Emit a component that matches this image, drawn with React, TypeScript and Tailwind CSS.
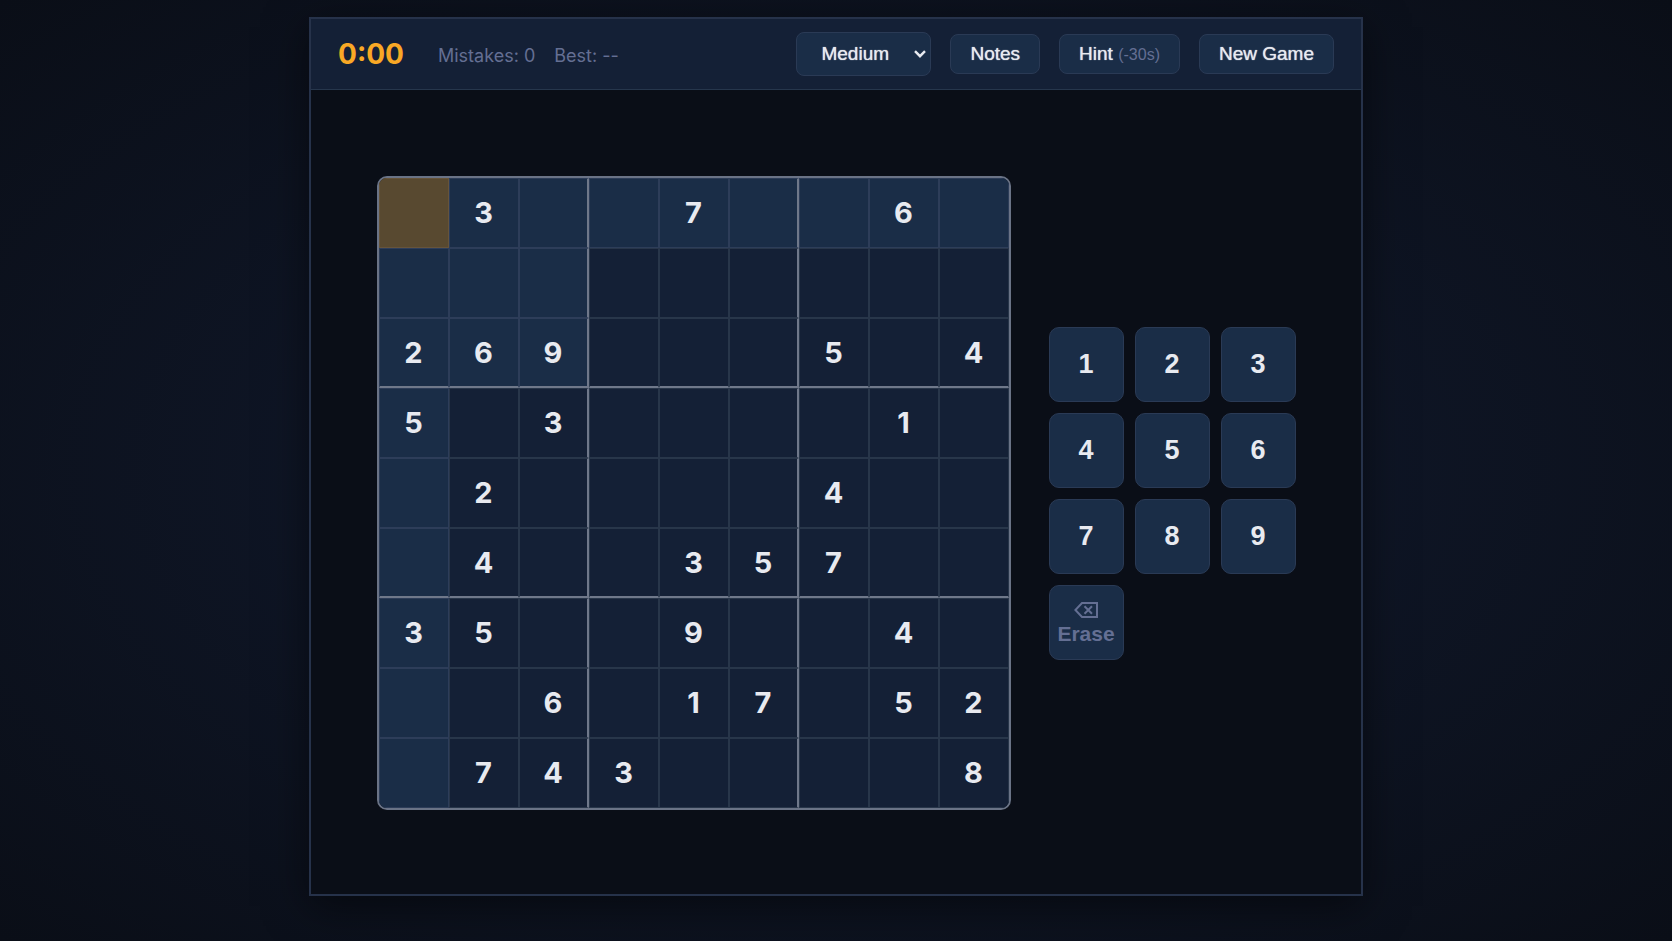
import { useState } from 'react';

const PUZZLE = [
  '030070060',
  '000000000',
  '269000504',
  '503000010',
  '020000400',
  '040035700',
  '350090040',
  '006017052',
  '074300008',
];

const LEVELS = ['Easy', 'Medium', 'Hard', 'Expert'];

interface Position {
  row: number;
  col: number;
}

interface CellProps {
  row: number;
  col: number;
  value: string;
  selected: Position;
  onSelect: (pos: Position) => void;
}

function Cell({ row, col, value, selected, onSelect }: CellProps) {
  const isSelected = selected.row === row && selected.col === col;
  const sameBox =
    Math.floor(selected.row / 3) === Math.floor(row / 3) &&
    Math.floor(selected.col / 3) === Math.floor(col / 3);
  const isPeer = selected.row === row || selected.col === col || sameBox;

  const background = isSelected ? 'bg-[#584930]' : isPeer ? 'bg-[#1a2d47]' : 'bg-[#142036]';
  const line = isSelected ? 'border-[#66543b]' : isPeer ? 'border-[#2d3d59]' : 'border-[#28364a]';
  const right = col === 2 || col === 5 ? 'border-r-2 border-r-[#6f788a]' : '';
  const bottom = row === 2 || row === 5 ? 'border-b-2 border-b-[#6f788a]' : '';

  return (
    <button
      aria-label={`Row ${row + 1}, column ${col + 1}`}
      onClick={() => onSelect({ row, col })}
      className={`flex size-[70px] items-center justify-center border text-[29px] font-bold text-[#e8eaf0] outline-none ${background} ${line} ${right} ${bottom}`}
    >
      {value === '0' ? '' : value}
    </button>
  );
}

export default function App() {
  const [level, setLevel] = useState('Medium');
  const [board, setBoard] = useState(PUZZLE.map((line) => line.split('')));
  const [selected, setSelected] = useState<Position>({ row: 0, col: 0 });

  const placeNumber = (value: string) => {
    if (PUZZLE[selected.row][selected.col] !== '0') return;
    const next = board.map((line) => [...line]);
    next[selected.row][selected.col] = value;
    setBoard(next);
  };

  const newGame = () => {
    setBoard(PUZZLE.map((line) => line.split('')));
    setSelected({ row: 0, col: 0 });
  };

  const actionClass =
    "h-10 rounded-lg border border-[#2a3a55] bg-[#1a2d47] px-[19px] font-['Liberation_Sans',Arial,sans-serif] text-[19px] leading-6 font-medium text-[#e8eaf0] [text-shadow:0_0_1px_currentColor] hover:bg-[#223858]";
  const keyClass =
    "size-[75px] rounded-[10px] border border-[#2a3a55] bg-[#1a2d47] font-['Liberation_Sans',Arial,sans-serif] font-bold hover:bg-[#223858]";

  return (
    <div className="flex min-h-screen justify-center bg-[#0a0e17] bg-[radial-gradient(ellipse_at_center,#121b30_0%,#0a0e17_100%)] px-4 pt-[17px] pb-[45px] font-[Inter,sans-serif] text-[#e8eaf0]">
      <div className="flex w-full max-w-[1054px] flex-col border-2 border-[#26324a] bg-[#0a0e17] shadow-[0_10px_40px_rgba(0,0,0,0.5)]">
        {/* Header */}
        <header className="flex items-center justify-between border-b border-[#26364c] bg-[#142036] px-[27px] py-[13px]">
          <div className="flex items-center">
            <span className="text-[28px] leading-9 font-bold text-[#f9a825]">0:00</span>
            <div className="ml-[34px] flex gap-[19px] pt-0.5 text-[18px] text-[#646f93]">
              <span>Mistakes: 0</span>
              <span>Best: --</span>
            </div>
          </div>

          <div className="flex items-center gap-[19px]">
            <div className="relative">
              <select
                aria-label="Difficulty"
                value={level}
                onChange={(e) => setLevel(e.target.value)}
                className="h-[44px] w-[135px] appearance-none rounded-lg border border-[#2a3a55] bg-[#1a2d47] pl-6 font-['Liberation_Sans',Arial,sans-serif] text-[19px] font-medium text-[#e8eaf0] [text-shadow:0_0_1px_currentColor]"
              >
                {LEVELS.map((name) => (
                  <option key={name}>{name}</option>
                ))}
              </select>
              <svg
                viewBox="0 0 12 8"
                className="pointer-events-none absolute top-[18px] right-[5px] h-2 w-3"
                fill="none"
                stroke="#e8eaf0"
                strokeWidth="2.4"
              >
                <path d="M1 1.2 6 6.2 11 1.2" />
              </svg>
            </div>
            <button className={actionClass}>Notes</button>
            <button className={actionClass}>
              Hint <span className="text-[16px] text-[#646f93] [text-shadow:none]">(-30s)</span>
            </button>
            <button onClick={newGame} className={actionClass}>
              New Game
            </button>
          </div>
        </header>

        {/* Board and number pad */}
        <main className="flex flex-1 items-center justify-center gap-[38px] pt-0.5">
          <div className="grid grid-cols-[repeat(9,70px)] overflow-hidden rounded-[10px] border-2 border-[#6a7386]">
            {board.map((line, row) =>
              line.map((value, col) => (
                <Cell
                  key={`${row}-${col}`}
                  row={row}
                  col={col}
                  value={value}
                  selected={selected}
                  onSelect={setSelected}
                />
              ))
            )}
          </div>

          <div className="grid grid-cols-3 gap-[11px]">
            {['1', '2', '3', '4', '5', '6', '7', '8', '9'].map((n) => (
              <button key={n} onClick={() => placeNumber(n)} className={`${keyClass} text-[27px]`}>
                {n}
              </button>
            ))}
            <button
              onClick={() => placeNumber('0')}
              className={`${keyClass} flex flex-col items-center justify-center text-[21px] leading-6 text-[#646f93]`}
            >
              <svg viewBox="0 0 24 16" className="my-1 h-4 w-6" fill="none" stroke="currentColor" strokeWidth="2">
                <path d="M8 1H23V15H8L1.4 8Z" />
                <path d="M10.5 4.2 18 11.8M18 4.2 10.5 11.8" />
              </svg>
              Erase
            </button>
          </div>
        </main>
      </div>
    </div>
  );
}
